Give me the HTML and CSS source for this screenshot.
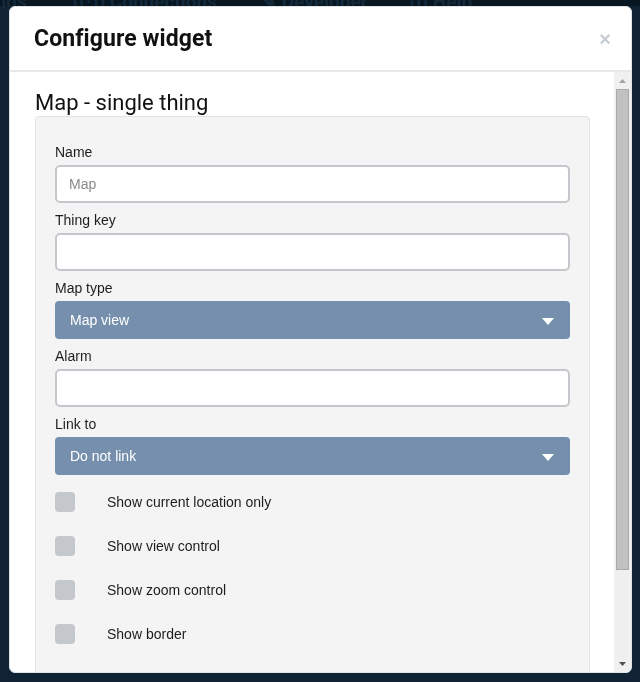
FILE: index.html
```html
<!DOCTYPE html>
<html lang="en">
<head>
<meta charset="utf-8">
<title>Configure widget</title>
<link rel="stylesheet" href="styles.css">
</head>
<body>
<nav class="topnav">
  <span class="nav-item nav-things">Things</span>
  <span class="nav-item nav-conn">((·)) Connections</span>
  <span class="nav-item nav-dev">✎ Developer</span>
  <span class="nav-item nav-help">(i) Help</span>
</nav>

<div class="modal">
  <div class="modal-header">
    <h1 class="modal-title">Configure widget</h1>
    <span class="close">×</span>
  </div>
  <div class="modal-body">
    <div class="scroll-content">
      <h2 class="widget-title">Map - single thing</h2>
      <div class="panel">
        <div class="field">
          <label class="label">Name</label>
          <div class="input"><span class="placeholder">Map</span></div>
        </div>
        <div class="field">
          <label class="label">Thing key</label>
          <div class="input"></div>
        </div>
        <div class="field">
          <label class="label">Map type</label>
          <div class="select"><span>Map view</span><span class="caret"></span></div>
        </div>
        <div class="field">
          <label class="label">Alarm</label>
          <div class="input"></div>
        </div>
        <div class="field">
          <label class="label">Link to</label>
          <div class="select"><span>Do not link</span><span class="caret"></span></div>
        </div>
        <div class="checks">
          <div class="check"><span class="box"></span><span class="check-label">Show current location only</span></div>
          <div class="check"><span class="box"></span><span class="check-label">Show view control</span></div>
          <div class="check"><span class="box"></span><span class="check-label">Show zoom control</span></div>
          <div class="check"><span class="box"></span><span class="check-label">Show border</span></div>
        </div>
      </div>
    </div>
    <div class="scrollbar">
      <div class="sb-btn">
        <svg width="7" height="4" viewBox="0 0 7 4"><polygon points="3.5,0 7,4 0,4" fill="#a3a3a3"/></svg>
      </div>
      <div class="sb-track"><div class="sb-thumb"></div></div>
      <div class="sb-btn">
        <svg width="7" height="4" viewBox="0 0 7 4"><polygon points="0,0 7,0 3.5,4" fill="#505050"/></svg>
      </div>
    </div>
  </div>
</div>
</body>
</html>
```

FILE: styles.css
```css
html, body {
  margin: 0;
  padding: 0;
}
body {
  width: 640px;
  height: 682px;
  overflow: hidden;
  background: #0f2335;
  font-family: "Liberation Sans", Arial, sans-serif;
}
.topnav {
  height: 6px;
  background: #071621;
  display: flex;
  align-items: flex-start;
  font-family: Roboto, sans-serif;
  font-weight: 700;
  font-size: 19px;
  color: #14293a;
  white-space: nowrap;
  overflow: visible;
}
.nav-item {
  line-height: 18px;
  margin-top: -7px;
}
.nav-things { margin-left: -32px; }
.nav-conn { margin-left: 46px; }
.nav-dev { margin-left: 44px; }
.nav-help { margin-left: 42px; }

.modal {
  position: fixed;
  left: 9px;
  top: 6px;
  width: 621px;
  height: 665px;
  background: #fff;
  border: 1px solid #dfe3e6;
  border-radius: 6px;
  display: flex;
  flex-direction: column;
  overflow: hidden;
}
.modal-header {
  height: 63px;
  flex: none;
  border-bottom: 2px solid #e5e9ec;
  display: flex;
  align-items: center;
  justify-content: space-between;
  padding: 0 20px 0 24px;
}
.modal-title {
  margin: 0;
  font-family: Roboto, sans-serif;
  font-weight: 700;
  font-size: 23px;
  color: #111;
  letter-spacing: 0.1px;
}
.close {
  font-family: "Liberation Sans", Arial, sans-serif;
  font-weight: 700;
  font-size: 20px;
  color: #c6ccd2;
  line-height: 20px;
  margin-top: 1px;
}
.modal-body {
  flex: 1;
  min-height: 0;
  display: flex;
}
.scroll-content {
  flex: 1;
  min-width: 0;
  overflow: hidden;
  padding: 0 24px 0 25px;
}
.scrollbar {
  width: 17px;
  flex: none;
  background: #f0f0f0;
  display: flex;
  flex-direction: column;
}
.sb-btn {
  height: 17px;
  flex: none;
  display: flex;
  align-items: center;
  justify-content: center;
}
.sb-btn svg {
  display: block;
}
.sb-track {
  flex: 1;
  padding: 0 2px;
}
.sb-thumb {
  height: 481px;
  background: #c1c1c1;
  box-shadow: inset 0 0 0 1px #a9a9a9;
}

.widget-title {
  margin: 19px 0 1px;
  font-family: Roboto, sans-serif;
  font-weight: 400;
  font-size: 22px;
  line-height: 24px;
  color: #111;
}
.panel {
  background: #f4f4f4;
  border: 1px solid #e2e2e2;
  border-radius: 4px;
  padding: 24px 19px 118px;
}
.field {
  display: flex;
  flex-direction: column;
  margin-bottom: 6px;
}
.label {
  font-size: 14px;
  line-height: 22px;
  color: #1d1d1d;
  margin-bottom: 2px;
}
.input {
  height: 34px;
  background: #fff;
  border: 2px solid #c4c8cc;
  border-radius: 5px;
  display: flex;
  align-items: center;
  padding: 0 12px;
}
.placeholder {
  font-size: 14px;
  color: #8a8a8a;
}
.select {
  height: 38px;
  background: #758fac;
  border-radius: 4px;
  display: flex;
  align-items: center;
  justify-content: space-between;
  padding: 0 16px 0 15px;
  color: #fff;
  font-size: 14px;
}
.caret {
  width: 0;
  height: 0;
  border-left: 6px solid transparent;
  border-right: 6px solid transparent;
  border-top: 7px solid #fff;
  margin-top: 2px;
}
.checks {
  margin-top: 17px;
  display: flex;
  flex-direction: column;
  gap: 24px;
}
.check {
  display: flex;
  align-items: center;
  height: 20px;
}
.box {
  width: 20px;
  height: 20px;
  background: #c4c8cc;
  border-radius: 4px;
  flex: none;
}
.check-label {
  margin-left: 32px;
  font-size: 14px;
  color: #1d1d1d;
}
```
